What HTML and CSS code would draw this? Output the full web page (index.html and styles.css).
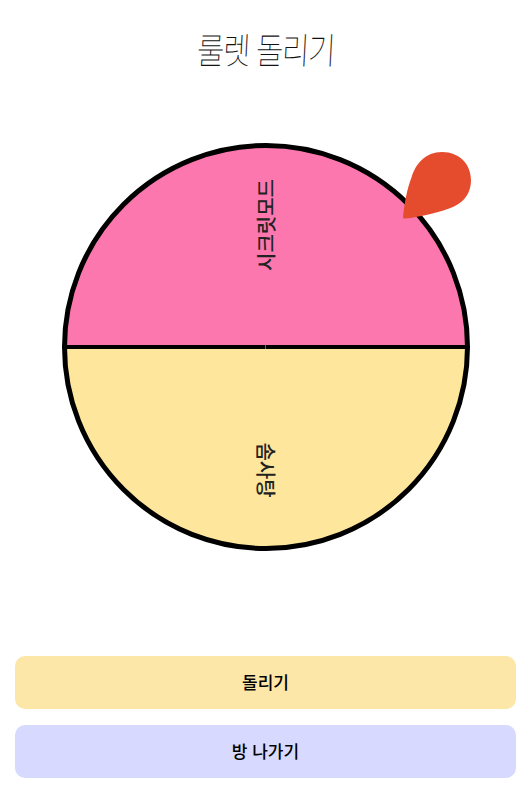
FILE: index.html
```html
<!DOCTYPE html>
<html lang="ko">
<head>
<meta charset="utf-8">
<title>룰렛 돌리기</title>
<link rel="stylesheet" href="styles.css">
</head>
<body>
<main class="page">
  <h1 class="title"><span class="title-text">룰렛 돌리기</span></h1>
  <div class="wheel-area">
    <div class="wheel">
      <div class="divider"></div>
      <span class="label label-top">시크릿모드</span>
      <span class="label label-bottom">솜사탕</span>
      <svg class="pointer" viewBox="0 0 70 70" width="70" height="70" aria-hidden="true">
        <path d="M2.6 67.6C1.6 67.6 1 66.8 1.1 65.8C2.4 52 5.2 37 9.5 26.5C13.5 13 23.5 1 40 1C57.5 1 69.4 13.5 69 30C68.7 41 63.500 50 52 55.500C40 60.800 18 66.200 2.6 67.6Z"/>
      </svg>
    </div>
  </div>
  <div class="actions">
    <button class="btn btn-spin" type="button">돌리기</button>
    <button class="btn btn-leave" type="button">방 나가기</button>
  </div>
</main>
</body>
</html>
```
FILE: styles.css
```css
* { box-sizing: border-box; }

html, body {
  margin: 0;
  background: #fff;
}

.page {
  width: 529px;
  height: 805px;
  padding: 0 13px 0 15px;
  display: flex;
  flex-direction: column;
  font-family: "Noto Sans CJK KR", "Noto Sans", sans-serif;
  overflow: hidden;
}

.title {
  margin: 25px 0 0;
  height: 46px;
  font-size: 30px;
  line-height: 46px;
  font-weight: 100;
  text-align: center;
  color: #111;
}

.title-text {
  display: inline-block;
  letter-spacing: -1.5px;
  transform: skewX(-3deg) scaleY(1.22);
}

.wheel-area {
  margin-top: 72px;
  padding-left: 47px;
}

.wheel {
  position: relative;
  width: 408px;
  height: 408px;
  border: 5px solid #000;
  border-radius: 50%;
  background: linear-gradient(to bottom, #fb77ae 50%, #fee69c 50%);
}

.divider {
  position: absolute;
  left: 0;
  right: 0;
  top: 197px;
  height: 4px;
  background: #000;
}

.divider::after {
  content: "";
  position: absolute;
  left: 198px;
  top: 0;
  width: 1px;
  height: 4px;
  background: #666;
}

.label {
  position: absolute;
  left: 50%;
  font-size: 20px;
  line-height: 24px;
  font-weight: 500;
  color: #222;
  white-space: nowrap;
}

.label-top {
  top: 65px;
  transform: translateX(-50%) rotate(-90deg);
}

.label-bottom {
  top: 310px;
  transform: translateX(-50%) rotate(90deg);
}

.pointer {
  position: absolute;
  left: 335px;
  top: 3px;
  fill: #e54b2d;
}

.actions {
  margin-top: 105px;
  display: flex;
  flex-direction: column;
  gap: 16px;
}

.btn {
  height: 53px;
  padding: 0 0 2px;
  border: 0;
  border-radius: 10px;
  font-family: inherit;
  font-size: 17px;
  font-weight: 500;
  color: #000;
}

.btn-spin { background: #fce7a8; }
.btn-leave { background: #d7dafe; }
```
